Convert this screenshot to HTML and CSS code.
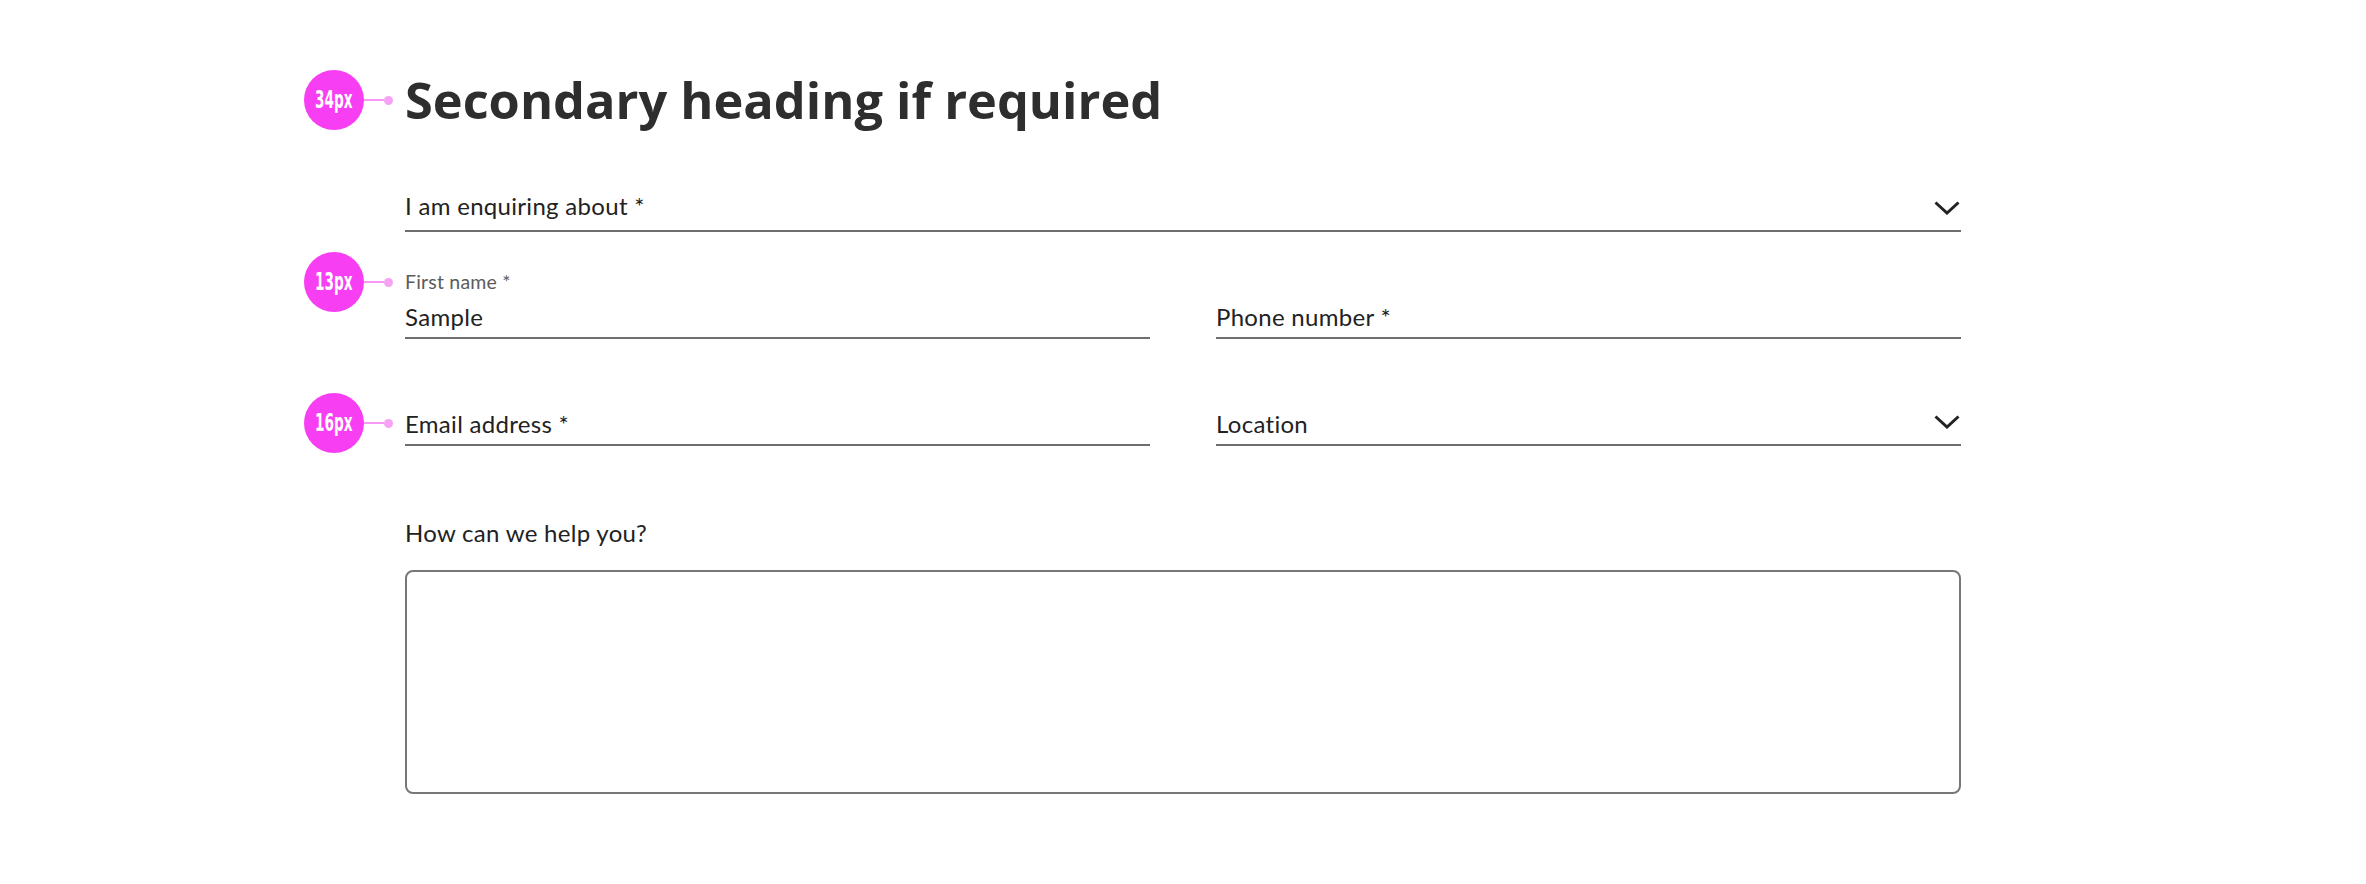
FILE: index.html
```html
<!DOCTYPE html>
<html lang="en">
<head>
    <meta charset="UTF-8">
    <meta name="viewport" content="width=device-width, initial-scale=1.0">
    <title>Enquiry form</title>
    <link rel="stylesheet" href="styles.css">
</head>
<body>
    <div class="container">

        <h2 class="heading">
            <span class="marker"><span class="marker-badge"><span>34px</span></span></span>
            Secondary heading if required
        </h2>

        <form id="enquiryForm">

            <div class="select-field select-top">
                <select id="topic" name="topic">
                    <option selected="selected">I am enquiring about *</option>
                    <option value="sales">Sales</option>
                    <option value="support">Support</option>
                    <option value="other">Other</option>
                </select>
                <svg class="chevron" width="26" height="14" viewBox="0 0 26 14"><path d="M1.5 1.5 L13 12 L24.5 1.5" fill="none" stroke="#222" stroke-width="3"/></svg>
            </div>

            <div class="row">
                <div class="text-field">
                    <label for="firstName" class="field-label">
                        <span class="marker"><span class="marker-badge"><span>13px</span></span></span>
                        First name *
                    </label>
                    <input type="text" id="firstName" name="firstName" value="Sample">
                </div>
                <div class="text-field">
                    <label for="phone" class="field-label"></label>
                    <input type="tel" id="phone" name="phone" placeholder="Phone number *">
                </div>
            </div>

            <div class="row">
                <div class="text-field">
                    <label for="email" class="field-label"></label>
                    <div class="input-wrap">
                        <span class="marker"><span class="marker-badge"><span>16px</span></span></span>
                        <input type="email" id="email" name="email" placeholder="Email address *">
                    </div>
                </div>
                <div class="select-field select-location">
                    <select id="location" name="location">
                        <option selected="selected">Location</option>
                        <option value="uk">United Kingdom</option>
                        <option value="eu">Europe</option>
                        <option value="us">United States</option>
                    </select>
                    <svg class="chevron" width="26" height="14" viewBox="0 0 26 14"><path d="M1.5 1.5 L13 12 L24.5 1.5" fill="none" stroke="#222" stroke-width="3"/></svg>
                </div>
            </div>

            <label for="message" class="help-label">How can we help you?</label>
            <textarea id="message" name="message"></textarea>
        </form>
    </div>
</body>
</html>
```

FILE: styles.css
```css
body {
    font-family: Lato, "Open Sans", sans-serif;
    margin: 0;
    background-color: #fff;
    color: #222;
}
.container {
    width: 1556px;
    margin: 0 auto;
    padding-top: 70px;
}
.heading {
    position: relative;
    margin: 0;
    font-family: "Open Sans", Lato, sans-serif;
    font-size: 50.5px;
    line-height: 60px;
    font-weight: 700;
    color: #2e2e2e;
}

/* size annotations hanging off the left edge */
.marker {
    position: absolute;
    right: calc(100% + 12px);
    top: 50%;
    transform: translateY(-50%);
    display: flex;
    align-items: center;
    width: 89px;
    height: 60px;
}
.marker::after {
    content: "";
    flex: 1;
    height: 2px;
    background-color: #f89af5;
    margin-right: 9px;
}
.marker::before {
    content: "";
    position: absolute;
    right: 0;
    top: 25.5px;
    width: 9px;
    height: 9px;
    border-radius: 50%;
    background-color: #f7a3f4;
}
.marker-badge {
    display: flex;
    align-items: center;
    justify-content: center;
    width: 60px;
    height: 60px;
    border-radius: 50%;
    background-color: #f83ef2;
    color: #fff;
    font-family: "DejaVu Sans Condensed", "DejaVu Sans", sans-serif;
    font-stretch: condensed;
    font-weight: 700;
    font-size: 24px;
    line-height: 1;
    letter-spacing: 0;
}
.marker-badge span {
    display: inline-block;
    transform: scaleX(0.63);
}

select, input, textarea {
    font-family: inherit;
    font-size: 24px;
    letter-spacing: 0.3px;
    color: #222;
}
select, input {
    appearance: none;
    display: block;
    width: 100%;
    height: 32px;
    padding: 0;
    border: none;
    background: transparent;
    outline: none;
}
input::placeholder {
    color: #222;
    opacity: 1;
}

.select-field {
    position: relative;
    border-bottom: 2px solid #6e6e6e;
}
.select-top {
    margin-top: 59px;
    padding-bottom: 9px;
}
.select-location {
    padding-bottom: 5px;
}
.chevron {
    position: absolute;
    right: 1px;
    pointer-events: none;
}
.select-top .chevron {
    top: 12px;
}
.select-location .chevron {
    top: 8px;
}

.row {
    display: grid;
    grid-template-columns: 1fr 1fr;
    column-gap: 66px;
    align-items: end;
    margin-top: 38px;
}
.text-field {
    border-bottom: 2px solid #6e6e6e;
    padding-bottom: 5px;
}
.field-label {
    position: relative;
    display: block;
    height: 24px;
    margin-bottom: 6px;
    font-size: 19.5px;
    line-height: 24px;
    letter-spacing: 0.2px;
    color: #5c5c5c;
}
.input-wrap {
    position: relative;
}

.help-label {
    display: block;
    margin-top: 71px;
    font-size: 24px;
    line-height: 32px;
    letter-spacing: 0.3px;
}
textarea {
    display: block;
    box-sizing: border-box;
    width: 100%;
    height: 224px;
    margin-top: 21px;
    border: 2px solid #777;
    border-radius: 8px;
    resize: none;
}
```
